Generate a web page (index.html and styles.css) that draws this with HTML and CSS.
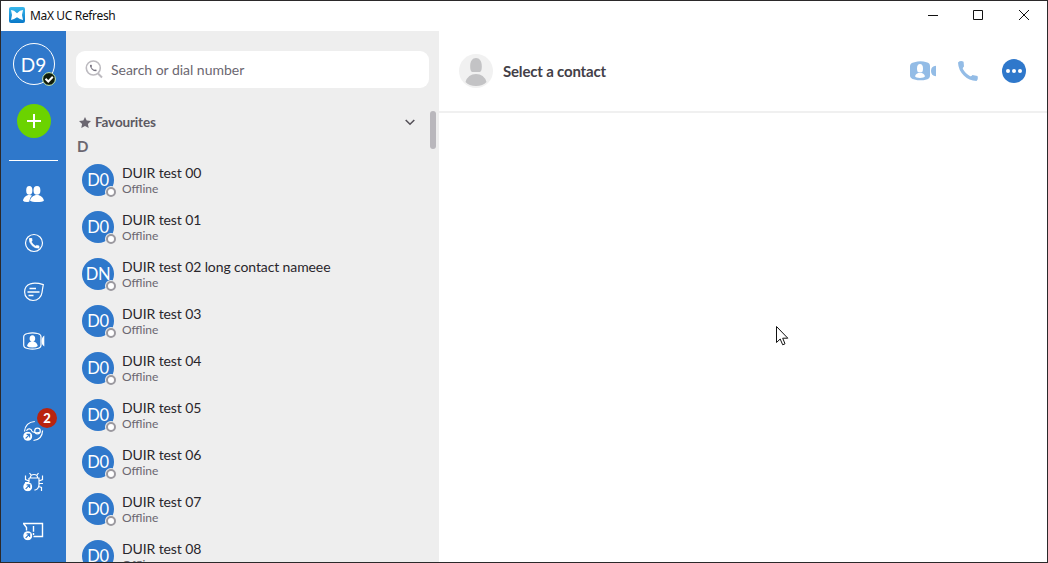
FILE: index.html
```
<!DOCTYPE html>
<html lang="en">
<head>
<meta charset="utf-8">
<title>MaX UC Refresh</title>
<link rel="stylesheet" href="styles.css">
</head>
<body>
<svg class="defs" width="0" height="0">
  <symbol id="handset" viewBox="0 0 20 20"><path d="M0 1.500Q2.500-.8 5.600.7L6 5.500Q4.500 6.500 4.800 7.800Q7.500 13 12.200 15.200Q13.600 15.400 14.400 14L19.500 15Q20.500 18 18.500 20Q11 19.800 5.800 14.500Q.3 9 0 1.500Z" fill="currentColor"/></symbol>
  <symbol id="launch" viewBox="0 0 10 10"><circle cx="5" cy="5" r="4.700" fill="#fff"/><path d="M2.800 7.200L6.800 3.200M3.800 3H7V6.200" fill="none" stroke="#2f78cb" stroke-width="1.200"/></symbol>
</svg>
<div class="window">
  <header class="titlebar">
    <svg class="app-icon" width="16" height="16" viewBox="0 0 16 16"><defs><linearGradient id="g" x2="0" y2="1"><stop stop-color="#38b8ec"/><stop offset="1" stop-color="#0878c8"/></linearGradient></defs><rect width="16" height="16" rx="2" fill="url(#g)"/><path d="M2 3L5 3.800L8 6.300L11 3.800L14 3L13 8L14 13L11 12L8 10.200L5 12L2 13L3 8Z" fill="#fff"/></svg>
    <span class="app-name">MaX UC Refresh</span>
    <svg class="win-buttons" width="104" height="12" viewBox="0 0 104 12" fill="none" stroke="#111" stroke-width="1"><path d="M1 6.500H11M46.500 1.500H55.500V10.500H46.500ZM92 1L102 11M102 1L92 11"/></svg>
  </header>
  <div class="main">
    <nav class="rail">
      <div class="me">D9
        <svg class="me-status" width="14" height="14" viewBox="0 0 14 14"><circle cx="7" cy="7" r="6.400" fill="#101c0c" stroke="#c9efb4" stroke-width="1"/><path d="M3.500 6.800L6.300 9.500L10.800 4.800" fill="none" stroke="#fff" stroke-width="2"/></svg>
      </div>
      <div class="add"><svg width="14" height="14" viewBox="0 0 14 14"><path d="M7 0V14M0 7H14" stroke="#fff" stroke-width="2"/></svg></div>
      <div class="rule"></div>
      <div class="item"><svg width="26" height="26" viewBox="0 0 26 26" fill="#fff"><path d="M8.300 5C10.300 5 11.400 6.400 11.400 9.500C11.400 12.500 10.300 13.700 8.300 13.700S5.200 12.500 5.200 9.500C5.200 6.400 6.300 5 8.300 5ZM16 5C18.300 5 19.400 6.400 19.400 9.500C19.400 12.500 18.300 13.700 16 13.700S12.500 12.500 12.500 9.500C12.500 6.400 13.700 5 16 5ZM2 19.700C2.500 16.500 5 14 8.300 14Q10 14 11 14.500Q8.500 16.700 8.200 20.800Q3 21.200 2 19.700ZM9.100 19.700C9.400 16.500 12.500 14 16 14S22.500 16.500 22.900 19.700C22 21.500 10.500 21.500 9.100 19.700Z"/></svg></div>
      <div class="item"><svg width="26" height="26" viewBox="0 0 26 26" color="#fff"><circle cx="13" cy="13" r="8.500" fill="none" stroke="#fff" stroke-width="1.200"/><use href="#handset" x="8" y="8" width="10.500" height="10.500" stroke="#fff"/></svg></div>
      <div class="item"><svg width="26" height="26" viewBox="0 0 26 26" fill="none" stroke="#fff"><path d="M22.300 5.600C18 4.300 13 3.800 9.500 4.800C5.800 6 3.600 9.300 3.600 13C3.600 17.800 7.500 21.500 12 21.500C17 21.500 20.500 17.800 21 13.500Q21.600 9.500 22.300 5.600Z" stroke-width="1.200"/><path d="M8.500 9.500H15M6.500 13H18.500M7.500 16.500H12.500" stroke-width="1.700"/></svg></div>
      <div class="item"><svg width="26" height="26" viewBox="0 0 26 26"><path d="M6.500 5.500Q11.500 4.300 16.500 5.500Q20 6.200 20 9V17Q20 19.800 16.500 20.500Q11.500 21.700 6.500 20.500Q2.700 19.800 2.700 17V9Q2.700 6.200 6.500 5.500Z" fill="none" stroke="#fff" stroke-width="1.200"/><path d="M11.400 7.200Q14.200 7.200 14.200 10.800Q14.200 13.600 11.400 13.600T8.600 10.800Q8.600 7.200 11.400 7.200ZM6 18Q7.200 13.600 11.400 13.600T16.800 18Q15.500 19.500 11.400 19.500T6 18ZM23.300 7.500V18.500Q20.600 17 20.600 13T23.300 7.500Z" fill="#fff"/></svg></div>
      <div class="item item-first-link"><svg width="26" height="26" viewBox="0 0 26 26"><path d="M13.800 3.500C7.500 4 4 7.700 3.500 13.500M5.500 12.700C7 10 10.500 10.500 11 13.500M21.600 12.500C21.300 18.300 18 22 12.500 22.500M11 13.500Q15 15.500 19 14.300" fill="none" stroke="#fff" stroke-width="1.200"/><circle cx="16.500" cy="13" r="2.800" fill="none" stroke="#fff" stroke-width="1.200"/><use href="#launch" x="2" y="13.500" width="9.500" height="9.500"/></svg><span class="count">2</span></div>
      <div class="item item-bug"><svg width="26" height="26" viewBox="0 0 26 26"><path d="M9.500 8.500Q9.500 5.500 13 5.500T16.500 8.500M8 9H18V16Q17.500 20.500 13.500 21.200M8 9V13M10 6L8.500 4M16 6L17.500 4M8 12L4.500 10.500V6.500M18 12L21.500 10.500V6.500M18 14.500H22M4 13.500H8M17.500 17.500L20.500 18.500V22" fill="none" stroke="#fff" stroke-width="1.200"/><use href="#launch" x="2" y="13" width="9.500" height="9.500"/></svg></div>
      <div class="item"><svg width="26" height="26" viewBox="0 0 26 26"><path d="M2 5.500H21.500V18.500H12.500M2.500 5.500L5.500 9.500V12.500M12.500 8V13.800M12.500 15V17" fill="none" stroke="#fff" stroke-width="1.400"/><use href="#launch" x="2" y="13" width="9.500" height="9.500"/></svg></div>
    </nav>
    <section class="contacts">
      <div class="search">
        <svg width="19" height="19" viewBox="0 0 19 19" color="#777380"><circle cx="8.300" cy="8" r="7" fill="none" stroke="#bdbbc0" stroke-width="1.600"/><path d="M13 13.500L17 17.500" stroke="#bdbbc0" stroke-width="2"/><use href="#handset" x="4.800" y="4.500" width="7" height="7"/></svg>
        <span>Search or dial number</span>
      </div>
      <div class="group">
        <svg width="12" height="11" viewBox="0 0 12 11"><path d="M6 0L7.700 3.600L12 4.100L8.900 6.900L9.700 11L6 9L2.300 11L3.100 6.900L0 4.100L4.300 3.600Z" fill="#6b6771"/></svg>
        <span>Favourites</span>
        <svg class="chevron" width="10" height="7" viewBox="0 0 10 7"><path d="M.7 1L5 5.200L9.300 1" fill="none" stroke="#555158" stroke-width="1.600"/></svg>
      </div>
      <div class="letter">D</div>
      <ul class="list">
        <li><div class="avatar">D0<i></i></div><div class="who"><b>DUIR test 00</b><span>Offline</span></div></li>
        <li><div class="avatar">D0<i></i></div><div class="who"><b>DUIR test 01</b><span>Offline</span></div></li>
        <li><div class="avatar">DN<i></i></div><div class="who"><b>DUIR test 02 long contact nameee</b><span>Offline</span></div></li>
        <li><div class="avatar">D0<i></i></div><div class="who"><b>DUIR test 03</b><span>Offline</span></div></li>
        <li><div class="avatar">D0<i></i></div><div class="who"><b>DUIR test 04</b><span>Offline</span></div></li>
        <li><div class="avatar">D0<i></i></div><div class="who"><b>DUIR test 05</b><span>Offline</span></div></li>
        <li><div class="avatar">D0<i></i></div><div class="who"><b>DUIR test 06</b><span>Offline</span></div></li>
        <li><div class="avatar">D0<i></i></div><div class="who"><b>DUIR test 07</b><span>Offline</span></div></li>
        <li><div class="avatar">D0<i></i></div><div class="who"><b>DUIR test 08</b><span>Offline</span></div></li>
      </ul>
      <div class="scroll-thumb"></div>
    </section>
    <section class="detail">
      <div class="detail-head">
        <svg width="34" height="34" viewBox="0 0 34 34"><circle cx="17" cy="17" r="17" fill="#f1f1f1"/><path d="M17 4C20.500 4 22.800 7 22.800 12Q23 17 21 18H13Q11 17 11.200 12C11.200 7 13.500 4 17 4ZM6.500 28Q9 20 17 20T27.500 28Q24 32 17 32T6.500 28Z" fill="#c3c3c5"/></svg>
        <h1>Select a contact</h1>
        <div class="actions">
          <svg width="27" height="20" viewBox="0 0 27 20"><path d="M4.500 1.200Q10.500-.5 16.500 1.200Q20 2 20 5V14.500Q20 17.500 16.500 18.500Q10.500 20.200 4.500 18.500Q0 17.500 0 14.500V5Q0 2 4.500 1.200ZM26 4.800V15.200Q21 14.800 21 10T26 4.800Z" fill="#93bce6"/><path d="M10 3Q13 3 13 7.500Q13 11 11.500 11.300H8.500Q7 11 7 7.500Q7 3 10 3ZM5 15.300Q6 11.800 10 11.800T15 15.300Q14 17 10 17T5 15.300Z" fill="#fff"/></svg>
          <svg class="call" width="20" height="20" color="#93bce6"><use href="#handset"/></svg>
          <svg width="24" height="24" viewBox="0 0 24 24"><circle cx="12" cy="12" r="12" fill="#2f78cb"/><g fill="#fff"><circle cx="6" cy="12" r="2"/><circle cx="12" cy="12" r="2"/><circle cx="18" cy="12" r="2"/></g></svg>
        </div>
      </div>
    </section>
  </div>
  <svg class="pointer" width="13" height="20" viewBox="0 0 13 20"><path d="M.5.500V16.500L4.200 13L6.700 18.800L9 17.800L6.700 12.200H11.800Z" fill="#fff" stroke="#111"/></svg>
</div>
</body>
</html>
```

FILE: styles.css
```
* { box-sizing: border-box; }
body { margin: 0; font-family: Lato, "Liberation Sans", sans-serif; overflow: hidden; }
svg { display: block; flex: none; }
.defs { position: absolute; }
.window { position: relative; display: flex; flex-direction: column; width: 1048px; height: 563px; border: 1px solid #2b292a; background: #fff; overflow: hidden; }

.titlebar { display: flex; align-items: center; flex: none; height: 30px; padding: 0 16px 2px 8px; color: #111; }
.app-name { margin-left: 5px; padding-top: 2px; font: 12px/16px "Noto Sans", "Open Sans", sans-serif; letter-spacing: -.35px; white-space: nowrap; }
.win-buttons { margin-left: auto; }

.main { display: flex; flex: 1; min-height: 0; }

.rail { display: flex; flex-direction: column; align-items: center; flex: none; width: 65px; padding-top: 12px; background: #2f78cb; color: #fff; }
.me { position: relative; display: grid; place-items: center; width: 42px; height: 42px; border: 1px solid #fff; border-radius: 50%; font-size: 19px; }
.me-status { position: absolute; right: -2px; bottom: -2px; }
.add { display: grid; place-items: center; width: 34px; height: 34px; margin-top: 19px; border-radius: 50%; background: #6bd300; }
.rule { width: 49px; height: 1px; margin: 22px 0 9px; background: #fff; }
.item { position: relative; display: grid; place-items: center; width: 65px; height: 48px; margin-bottom: 1px; padding-left: 1px; }
.item-first-link { margin-top: 41px; }
.item-bug { margin-top: 2px; }
.count { position: absolute; left: 36px; top: 1px; width: 20px; height: 20px; border-radius: 50%; background: #b9240f; font: 900 13px/20px Lato, sans-serif; text-align: center; }

.contacts { position: relative; flex: none; width: 373px; background: #eee; overflow: hidden; }
.search { display: flex; align-items: center; gap: 7px; height: 37px; margin: 20px 10px 0; padding-left: 9px; border-radius: 9px; background: #fff; color: #6b6771; font-size: 14px; letter-spacing: -.02px; }
.group { display: flex; align-items: center; gap: 4px; height: 20px; margin: 24px 24px 0 13px; color: #5c5962; font-size: 13.500px; font-weight: 700; letter-spacing: -.15px; }
.chevron { margin-left: auto; }
.letter { height: 20px; margin: 4px 0 0 11px; color: #6b6771; font-size: 15px; line-height: 20px; font-weight: 700; }
.list { margin: 0; padding: 0 0 0 16px; list-style: none; }
.list li { display: flex; gap: 8px; height: 47px; padding-top: 8px; }
.avatar { position: relative; width: 32px; height: 32px; border-radius: 50%; background: #2f78cb; color: #fff; font-size: 16.500px; line-height: 33px; letter-spacing: -.3px; text-align: center; }
.avatar i { position: absolute; right: -2px; bottom: -1px; width: 10px; height: 10px; border: 2px solid #9b999f; border-radius: 50%; background: #fff; box-shadow: 0 0 0 1px #eee; }
.who { display: flex; flex-direction: column; white-space: nowrap; }
.who b { color: #29262c; font-size: 14px; line-height: 18px; font-weight: 400; letter-spacing: -.11px; }
.who span { color: #6b6771; font-size: 12px; line-height: 14px; }
.scroll-thumb { position: absolute; left: 364px; top: 80px; width: 6px; height: 38px; border-radius: 3px; background: #b9b7bc; }

.detail { flex: 1; background: #fff; }
.detail-head { display: flex; align-items: center; height: 82px; padding: 0 21px 1px 20px; border-bottom: 2px solid #f0f0f0; }
.detail-head h1 { margin: 0 0 0 10px; color: #434047; font-size: 15px; font-weight: 700; letter-spacing: -.18px; white-space: nowrap; }
.actions { display: flex; align-items: center; margin-left: auto; padding-top: 1px; }
.call { margin: 0 24px 0 21px; }

.pointer { position: absolute; left: 775px; top: 325px; }
```
